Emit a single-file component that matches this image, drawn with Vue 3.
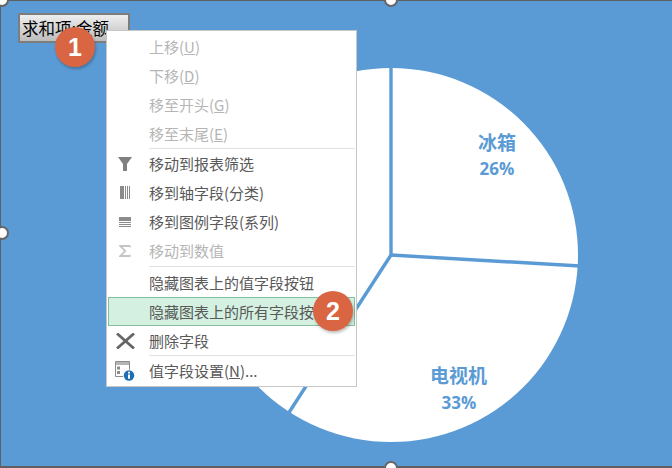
<script setup>
const groups = [
  [
    { label: '上移', key: 'U', off: true },
    { label: '下移', key: 'D', off: true },
    { label: '移至开头', key: 'G', off: true },
    { label: '移至末尾', key: 'E', off: true },
  ],
  [
    { label: '移动到报表筛选', icon: 'filter' },
    { label: '移到轴字段(分类)', icon: 'axis' },
    { label: '移到图例字段(系列)', icon: 'legend' },
    { label: '移动到数值', icon: 'sigma', off: true },
  ],
  [
    { label: '隐藏图表上的值字段按钮' },
    { label: '隐藏图表上的所有字段按钮', active: true },
    { label: '删除字段', icon: 'x' },
  ],
  [{ label: '值字段设置', key: 'N', tail: '...', icon: 'settings' }],
]
const handles = [
  { x: 2, y: 0 }, { x: 391, y: 0 }, { x: 2, y: 233 }, { x: 391, y: 468 },
]
</script>

<template>
  <div class="canvas">
    <svg class="chart" width="672" height="468" viewBox="0 0 672 468">
      <circle cx="391" cy="255" r="187" fill="#fff" />
      <g stroke="#5b9bd5" stroke-width="3.4" fill="none">
        <line x1="391" y1="255" x2="391" y2="66" />
        <line x1="391" y1="255" x2="580" y2="266" />
        <line x1="391" y1="255" x2="288" y2="414" />
      </g>
      <text class="lbl" x="497" y="150">冰箱</text>
      <text class="pct" x="497" y="175">26%</text>
      <text class="lbl" x="458.500" y="383">电视机</text>
      <text class="pct" x="459" y="409">33%</text>
    </svg>

    <span v-for="(h, i) in handles" :key="i" class="handle" :style="{ left: h.x + 'px', top: h.y + 'px' }"></span>

    <div class="field-btn">求和项:金额</div>

    <div class="menu">
      <div v-for="(g, gi) in groups" :key="gi" class="group">
        <div v-for="it in g" :key="it.label" class="row" :class="{ off: it.off, active: it.active }">
          <span class="ico">
            <svg v-if="it.icon === 'filter'" width="14" height="14" viewBox="0 0 14 14">
              <path d="M0 0h14L9 7v7H5V7z" fill="#808080" />
            </svg>
            <svg v-else-if="it.icon === 'axis'" width="10" height="13" viewBox="0 0 10 13">
              <path d="M0 0h4v13H0zM5 0h1v13H5zM7 0h1v13H7zM9 0h1v13H9z" fill="#8c8c8c" />
            </svg>
            <svg v-else-if="it.icon === 'legend'" width="12" height="10" viewBox="0 0 12 10">
              <path d="M0 0h12v4H0zM0 5h12v1H0zM0 7h12v1H0zM0 9h12v1H0z" fill="#8c8c8c" />
            </svg>
            <svg v-else-if="it.icon === 'sigma'" width="12" height="12" viewBox="0 0 12 12">
              <path d="M0 0h11.500v3.500L10.500 2H3.500l4 4-4 4h7l1-1.500V12H0v-1l5-5L0 1z" fill="#c4c4c4" />
            </svg>
            <svg v-else-if="it.icon === 'x'" width="19" height="16" viewBox="0 0 19 16">
              <path d="M1 .500 18 15.500M18 .500 1 15.500" stroke="#666" stroke-width="2.800" fill="none" />
            </svg>
            <svg v-else-if="it.icon === 'settings'" width="22" height="22" viewBox="0 0 22 22">
              <path d="M1.500 1.500h14v15h-14z" fill="#fff" stroke="#8c8c8c" />
              <path d="M2 2h13v3H2z" fill="#b5b5b5" />
              <path d="M3 6.500h3v3H3zM3 11h3v3H3z" fill="#8c8c8c" />
              <circle cx="15" cy="15.500" r="6" fill="#fff" />
              <circle cx="15" cy="15.500" r="5.200" fill="#1f6db3" />
              <path d="M14 14.500h2v4.200h-2zM14 11.800h2v1.700h-2z" fill="#fff" />
            </svg>
          </span>
          <span class="text">{{ it.label }}<template v-if="it.key">(<u>{{ it.key }}</u>)</template>{{ it.tail }}</span>
        </div>
      </div>
    </div>

    <span class="badge one">1</span>
    <span class="badge two">2</span>
  </div>
</template>

<style scoped>
.canvas {
  position: relative;
  width: 672px;
  height: 468px;
  overflow: hidden;
  background: #5b9bd5;
  font-family: "Liberation Sans", "Noto Sans CJK SC", sans-serif;
}
.canvas::after {
  content: "";
  position: absolute;
  inset: 0;
  border: solid #5f5f5f;
  border-width: 1px 0 2px 1px;
  pointer-events: none;
}
.chart { position: absolute; left: 0; top: 0; }
.lbl, .pct {
  fill: #5b9bd5;
  text-anchor: middle;
}
.lbl { font-size: 19px; font-family: "Noto Sans CJK SC", sans-serif; font-weight: 700; }
.pct { font-size: 17px; font-weight: 700; font-family: "Open Sans", "Noto Sans", sans-serif; }
.handle {
  position: absolute;
  z-index: 2;
  width: 14px;
  height: 14px;
  margin: -7px 0 0 -7px;
  box-sizing: border-box;
  border-radius: 50%;
  border: 2px solid #666;
  background: #fff;
}
.field-btn {
  position: absolute;
  left: 18px;
  top: 13px;
  width: 112px;
  height: 30px;
  box-sizing: border-box;
  padding-left: 2px;
  border: 2px solid #7d7d7d;
  background: linear-gradient(#eee, #bdbdbd);
  font-size: 16.5px;
  line-height: 27px;
  color: #000;
  font-family: "Noto Sans CJK SC", sans-serif;
  white-space: nowrap;
  overflow: hidden;
}
.menu {
  position: absolute;
  left: 106px;
  top: 30px;
  width: 251px;
  height: 357px;
  box-sizing: border-box;
  padding: 2px 1px 0;
  background: #fff;
  border: 1px solid #c6c6c6;
  display: flex;
  flex-direction: column;
  font-family: "Noto Sans CJK SC", sans-serif;
  font-size: 15px;
  color: #595959;
}
.group { position: relative; margin-bottom: 1px; }
.group:nth-child(2) { margin-bottom: 3px; }
.group:not(:last-child)::after {
  content: "";
  position: absolute;
  left: 41px;
  right: 0;
  bottom: 0;
  height: 1px;
  background: #e1e1e1;
}
.group:nth-child(2)::after { bottom: -1px; }
.row {
  position: relative;
  height: 29px;
  box-sizing: border-box;
  padding-bottom: 2px;
  display: flex;
  align-items: center;
}
.row.off { color: #b5b5b5; }
.row.active::before {
  content: "";
  position: absolute;
  inset: -1px 0 1px;
  background: #d3f0e0;
  border: 1px solid #86bfa0;
}
.ico {
  position: relative;
  width: 41px;
  flex: none;
  display: flex;
  align-items: center;
  justify-content: center;
  padding-right: 7px;
  box-sizing: border-box;
}
.text { position: relative; white-space: nowrap; overflow: hidden; }
.badge {
  position: absolute;
  z-index: 3;
  width: 40px;
  height: 40px;
  border-radius: 50%;
  background: #d96543;
  color: #fff;
  font: 700 25px/40px "Liberation Sans", sans-serif;
  text-align: center;
  box-shadow: 1px 2px 3px rgba(0, 0, 0, 0.25);
}
.one { left: 55px; top: 27px; }
.two { left: 313px; top: 291px; }
</style>
